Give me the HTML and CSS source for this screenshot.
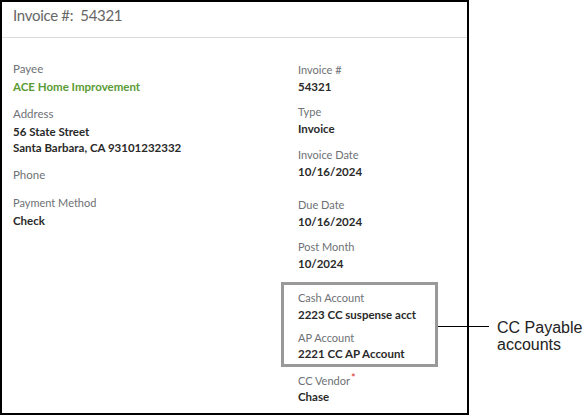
FILE: index.html
```html
<!DOCTYPE html>
<html>
<head>
<meta charset="utf-8">
<link rel="stylesheet" href="styles.css">
</head>
<body>
<div class="page">
  <div class="panel">
    <div class="panel-header">Invoice #:&nbsp; 54321</div>
    <div class="panel-body">
      <div class="col col-left">
        <div class="field">
          <div class="label label-lg">Payee</div>
          <div class="value value-link">ACE Home Improvement</div>
        </div>
        <div class="field">
          <div class="label label-lg">Address</div>
          <div class="value">56 State Street<br>Santa Barbara, CA 93101232332</div>
        </div>
        <div class="field field-phone">
          <div class="label label-lg">Phone</div>
          <div class="value value-empty"></div>
        </div>
        <div class="field">
          <div class="label">Payment Method</div>
          <div class="value">Check</div>
        </div>
      </div>
      <div class="col col-right">
        <div class="field">
          <div class="label">Invoice #</div>
          <div class="value">54321</div>
        </div>
        <div class="field field-wide">
          <div class="label">Type</div>
          <div class="value">Invoice</div>
        </div>
        <div class="field">
          <div class="label">Invoice Date</div>
          <div class="value">10/16/2024</div>
        </div>
        <div class="field field-spaced">
          <div class="label">Due Date</div>
          <div class="value">10/16/2024</div>
        </div>
        <div class="field">
          <div class="label">Post Month</div>
          <div class="value">10/2024</div>
        </div>
        <div class="highlight">
          <div class="field">
            <div class="label">Cash Account</div>
            <div class="value">2223 CC suspense acct</div>
          </div>
          <div class="field field-last">
            <div class="label">AP Account</div>
            <div class="value">2221 CC AP Account</div>
          </div>
          <div class="callout">CC Payable<br>accounts</div>
        </div>
        <div class="field field-vendor">
          <div class="label">CC Vendor<span class="req">*</span></div>
          <div class="value">Chase</div>
        </div>
      </div>
    </div>
  </div>
</div>
</body>
</html>
```

FILE: styles.css
```css
* { box-sizing: border-box; }
html, body { margin: 0; padding: 0; background: #fff; }
body { font-family: Lato, "Open Sans", sans-serif; }

.page {
  width: 583px;
  height: 415px;
}

.panel {
  width: 469px;
  height: 415px;
  border: 2px solid #000;
  display: flex;
  flex-direction: column;
}

.panel-header {
  height: 36px;
  border-bottom: 1px solid #dcdcdc;
  padding: 2px 0 0 11px;
  font-size: 15px;
  letter-spacing: -0.3px;
  line-height: 22px;
  color: #666;
}

.panel-body {
  display: grid;
  grid-template-columns: 285px 1fr;
  padding: 23px 0 0 11px;
}

.col {
  display: flex;
  flex-direction: column;
  align-items: flex-start;
}
.col-right { padding-top: 1px; }

.field { margin-bottom: 9px; }

.label {
  font-size: 11px;
  line-height: 16px;
  color: #6e7175;
  margin-bottom: 1px;
}
.label-lg { font-size: 11.5px; }

.value {
  font-size: 11.5px;
  line-height: 16px;
  font-weight: 700;
  color: #2a2a2a;
}
.value-link { color: #5a9b35; }
.value-empty { height: 0; }

.col-left .label { margin-bottom: 2px; }
.col-left .field { margin-bottom: 11px; }
.col-left .field-phone { margin-bottom: 12px; }
.col-left .field-phone .label { margin-bottom: 0; }

.field-wide { margin-bottom: 10px; }
.field-spaced { margin-top: 8px; }

.highlight {
  position: relative;
  margin: 1px 0 0 -17px;
  width: 157px;
  border: 3px solid #999;
  padding: 5px 0 2px 14px;
}
.highlight .field { margin-bottom: 7px; }
.highlight .field-last { margin-bottom: 0; }
.highlight .field-last .label { margin-bottom: 0; }

.highlight::after {
  content: "";
  position: absolute;
  left: 154px;
  top: 41px;
  width: 51px;
  height: 1px;
  background: #000;
}

.callout {
  position: absolute;
  left: 213px;
  top: 34px;
  width: 90px;
  font-family: "Liberation Sans", Arial, sans-serif;
  font-size: 16px;
  line-height: 17px;
  color: #222;
}

.field-vendor { margin-top: 3px; margin-bottom: 0; }
.field-vendor .label { margin-bottom: 0; }
.req { color: #e0302a; font-size: 11px; vertical-align: 3px; margin-left: 1px; }
```
